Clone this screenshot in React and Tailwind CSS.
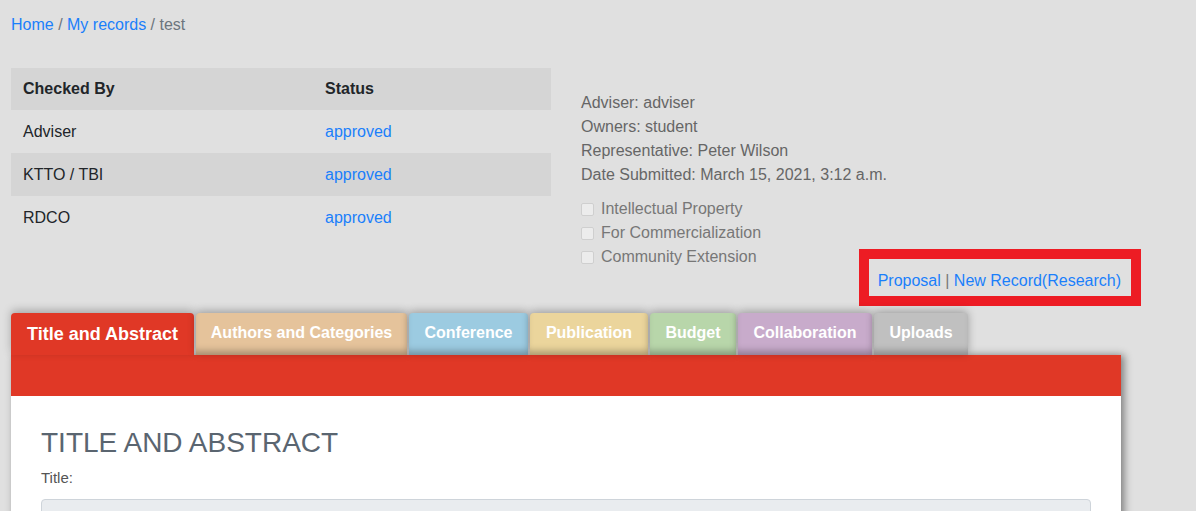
import React from 'react';

const statusRows = [
  { who: 'Adviser', status: 'approved', shaded: false },
  { who: 'KTTO / TBI', status: 'approved', shaded: true },
  { who: 'RDCO', status: 'approved', shaded: false },
];

const tabs = [
  { label: 'Title and Abstract', cls: 'bg-[#e03826] text-[18px] w-[183px]', active: true },
  { label: 'Authors and Categories', cls: 'bg-[#e5c39b] text-[16px] w-[211px]' },
  { label: 'Conference', cls: 'bg-[#9ccbe1] text-[16px] w-[119px]' },
  { label: 'Publication', cls: 'bg-[#ebd59c] text-[16px] w-[118px]' },
  { label: 'Budget', cls: 'bg-[#b8d6aa] text-[16px] w-[86px]' },
  { label: 'Collaboration', cls: 'bg-[#c8abcb] text-[16px] w-[134px]' },
  { label: 'Uploads', cls: 'bg-[#c0c0c0] text-[16px] w-[94px]' },
];

function Checkbox({ label }) {
  return (
    <div className="flex items-center h-6">
      <span className="w-[13px] h-[13px] rounded-[2px] border border-[#cfcfcf] bg-[#ececec]" />
      <span className="ml-[7px]">{label}</span>
    </div>
  );
}

export default function App() {
  return (
    <div className="min-h-screen bg-[#e0e0e0] font-['Liberation_Sans',Arial,sans-serif] text-[16px] leading-6 pl-[11px] pt-[13px]">
      {/* breadcrumb */}
      <div className="text-[#6c757d]">
        <a className="text-[#1a7ffb]">Home</a> / <a className="text-[#1a7ffb]">My records</a> / test
      </div>

      <div className="flex w-[1130px] mt-[31px]">
        {/* checked-by table */}
        <div className="w-[540px] text-[#212529]">
          <div className="flex h-[42px] items-center bg-[#d5d5d5] font-bold">
            <div className="w-[314px] pl-3">Checked By</div>
            <div>Status</div>
          </div>
          {statusRows.map((r) => (
            <div key={r.who} className={`flex h-[43px] items-center ${r.shaded ? 'bg-[#d5d5d5]' : ''}`}>
              <div className="w-[314px] pl-3">{r.who}</div>
              <a className="text-[#1a7ffb]">{r.status}</a>
            </div>
          ))}
        </div>

        {/* record info */}
        <div className="flex-1 ml-[30px] pt-[23px] text-[#666]">
          <div>Adviser: adviser</div>
          <div>Owners: student</div>
          <div>Representative: Peter Wilson</div>
          <div>Date Submitted: March 15, 2021, 3:12 a.m.</div>
          <div className="flex justify-between mt-[10px]">
            <div className="text-[#777]">
              <Checkbox label="Intellectual Property" />
              <Checkbox label="For Commercialization" />
              <Checkbox label="Community Extension" />
            </div>
            <div className="mt-[52px] border-[10px] border-[#ed1c24] pl-[9px] pr-[10px] pt-[10px] pb-[3px] h-[57px]">
              <a className="text-[#1a7ffb]">Proposal</a>
              <span className="text-[#777]"> | </span>
              <a className="text-[#1a7ffb]">New Record(Research)</a>
            </div>
          </div>
        </div>
      </div>

      {/* tabs */}
      <div className="w-[1110px] mt-[7px]">
        <div className="flex gap-[2px] items-end">
          {tabs.map((t) => (
            <div
              key={t.label}
              className={`h-[42px] flex items-center justify-center whitespace-nowrap rounded-t-[4px] font-bold text-white ${t.cls} ${
                t.active
                  ? 'shadow-[0_-3px_8px_rgba(0,0,0,0.25)]'
                  : 'shadow-[0_-2px_8px_rgba(0,0,0,0.3),inset_0_-8px_7px_-4px_rgba(0,0,0,0.28)] pb-[2px]'
              }`}
            >
              {t.label}
            </div>
          ))}
        </div>
        <div className="shadow-[3px_0_8px_rgba(0,0,0,0.45)]">
          <div className="h-[41px] bg-[#e03826]" />
          <div className="bg-white px-[30px] pt-[30px] pb-10">
            <h2 className="text-[28px] leading-[34px] text-[#5a6570] uppercase">Title and Abstract</h2>
            <div className="mt-[7px] text-[15px] leading-[22px] text-[#555]">Title:</div>
            <div className="mt-[10px] h-[38px] rounded-[4px] border border-[#ced4da] bg-[#e9ecef]" />
          </div>
        </div>
      </div>
    </div>
  );
}
